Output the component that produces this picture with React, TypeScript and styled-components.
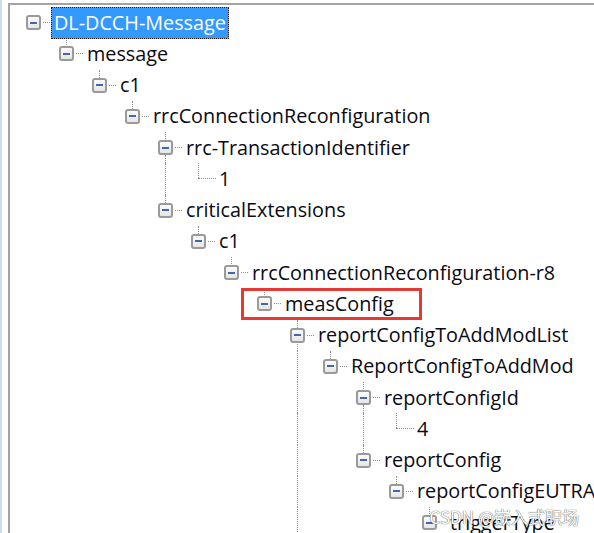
import React from "react";
import styled, { createGlobalStyle } from "styled-components";

const GlobalStyle = createGlobalStyle`
  html, body {
    margin: 0;
    padding: 0;
    background: #ffffff;
  }
  body {
    font-family: "Open Sans", "Noto Sans", sans-serif;
  }
`;

type TreeNode = {
  label: string;
  children?: TreeNode[];
  selected?: boolean;
  marked?: boolean;
  more?: boolean; // has siblings further down, out of view
};

const tree: TreeNode = {
  label: "DL-DCCH-Message",
  selected: true,
  children: [
    {
      label: "message",
      children: [
        {
          label: "c1",
          children: [
            {
              label: "rrcConnectionReconfiguration",
              children: [
                {
                  label: "rrc-TransactionIdentifier",
                  children: [{ label: "1" }],
                },
                {
                  label: "criticalExtensions",
                  children: [
                    {
                      label: "c1",
                      children: [
                        {
                          label: "rrcConnectionReconfiguration-r8",
                          children: [
                            {
                              label: "measConfig",
                              marked: true,
                              children: [
                                {
                                  label: "reportConfigToAddModList",
                                  more: true,
                                  children: [
                                    {
                                      label: "ReportConfigToAddMod",
                                      children: [
                                        {
                                          label: "reportConfigId",
                                          children: [{ label: "4" }],
                                        },
                                        {
                                          label: "reportConfig",
                                          children: [
                                            {
                                              label: "reportConfigEUTRA",
                                              children: [
                                                {
                                                  label: "triggerType",
                                                  children: [{ label: "" }],
                                                },
                                              ],
                                            },
                                          ],
                                        },
                                      ],
                                    },
                                  ],
                                },
                              ],
                            },
                          ],
                        },
                      ],
                    },
                  ],
                },
              ],
            },
          ],
        },
      ],
    },
  ],
};

type FlatRow = {
  node: TreeNode;
  depth: number;
  hasNext: boolean;
  rails: boolean[]; // one per ancestor column
};

const flatten = (
  node: TreeNode,
  depth: number,
  hasNext: boolean,
  rails: boolean[],
  out: FlatRow[]
) => {
  out.push({ node, depth, hasNext, rails });
  const kids = node.children || [];
  kids.forEach((kid, i) => {
    const next = i < kids.length - 1 || !!kid.more;
    flatten(kid, depth + 1, next, [...rails, hasNext && depth > 0], out);
  });
  return out;
};

// the empty label only exists so triggerType keeps its expander
const rows = flatten(tree, 0, false, [], []).filter(
  (r) => r.node.label !== ""
);

const LINE = "1px dotted #8f8f8f";

const Window = styled.div`
  display: flex;
  height: 100vh;
  overflow: hidden;
  position: relative;
`;

const SideStrip = styled.div`
  width: 2px;
  background: #cfdcee;
  flex-shrink: 0;
`;

const Panel = styled.div`
  flex: 1;
  margin: 3px 0 0 6px;
  border-left: 2px solid #a3a3a3;
  border-top: 2px solid #a3a3a3;
  padding: 2px 0 0 9px;
  overflow: hidden;
`;

const Row = styled.div`
  display: flex;
  height: 31.25px;
  white-space: nowrap;
`;

const Gutter = styled.div<{ $rail: boolean }>`
  width: 33px;
  flex-shrink: 0;
  display: flex;
  &::before {
    content: "";
    margin-left: 14px;
    border-left: ${({ $rail }) => ($rail ? LINE : "none")};
  }
`;

const NodeCell = styled.div`
  width: 32px;
  flex-shrink: 0;
  display: flex;
  flex-direction: column;
  padding-top: 2px;
  margin-top: -2px;
`;

const Stem = styled.div<{ $show: boolean }>`
  flex: 1;
  margin-left: 14px;
  border-left: ${({ $show }) => ($show ? LINE : "none")};
`;

const BoxLine = styled.div`
  display: flex;
  align-items: center;
  height: 14px;
`;

const Expander = styled.div`
  box-sizing: border-box;
  width: 15px;
  height: 15px;
  margin-left: 7px;
  border: 2px solid #9a9a9a;
  border-radius: 3px;
  background: linear-gradient(#fbfbfb, #e6e6e6);
  display: flex;
  align-items: center;
  justify-content: center;
  flex-shrink: 0;
`;

const Minus = styled.span`
  width: 7px;
  height: 2px;
  background: #4565b0;
`;

const Dots = styled.div`
  flex: 1;
  margin: 0 1px 0 2px;
  border-top: ${LINE};
`;

const Elbow = styled.div`
  height: 0;
  margin-left: 14px;
  border-top: ${LINE};
`;

const Label = styled.div<{ $selected: boolean }>`
  position: relative;
  box-sizing: border-box;
  height: 32px;
  margin-top: -0.5px;
  padding: 0 2px;
  font-size: 19.8px;
  line-height: 30px;
  color: ${({ $selected }) => ($selected ? "#ffffff" : "#0a0a14")};
  border: 1px dotted
    ${({ $selected }) => ($selected ? "#2a1c08" : "transparent")};
  background: ${({ $selected }) =>
    $selected
      ? "linear-gradient(#3399ff, #3399ff) padding-box, linear-gradient(#e3922c, #e3922c) border-box"
      : "transparent"};
`;

const Marker = styled.span`
  position: absolute;
  left: -42px;
  right: -26px;
  top: -1px;
  bottom: -1px;
  border: 3px solid #e53935;
  pointer-events: none;
`;

const Watermark = styled.div`
  position: absolute;
  right: 15px;
  bottom: 6px;
  font-family: "Noto Sans CJK SC", "Noto Sans", sans-serif;
  font-size: 17px;
  line-height: 20px;
  color: #ffffff;
  text-shadow: 0 0 1px #5e5e5e, 0 0 1px #5e5e5e;
`;

const TreeRow: React.FC<{ row: FlatRow }> = ({ row }) => {
  const { node, depth, hasNext, rails } = row;
  const isLeaf = !node.children || node.children.length === 0;

  return (
    <Row>
      {rails.map((r, i) => (
        <Gutter key={i} $rail={r} />
      ))}
      <NodeCell>
        <Stem $show={depth > 0} />
        {isLeaf ? (
          <Elbow />
        ) : (
          <BoxLine>
            <Expander>
              <Minus />
            </Expander>
            <Dots />
          </BoxLine>
        )}
        <Stem $show={hasNext} />
      </NodeCell>
      <Label $selected={!!node.selected}>
        {node.marked && <Marker />}
        {node.label}
      </Label>
    </Row>
  );
};

export default function App() {
  return (
    <>
      <GlobalStyle />
      <Window>
        <SideStrip />
        <Panel>
          {rows.map((r, i) => (
            <TreeRow key={i} row={r} />
          ))}
        </Panel>
        <Watermark>CSDN @嵌入式职场</Watermark>
      </Window>
    </>
  );
}
